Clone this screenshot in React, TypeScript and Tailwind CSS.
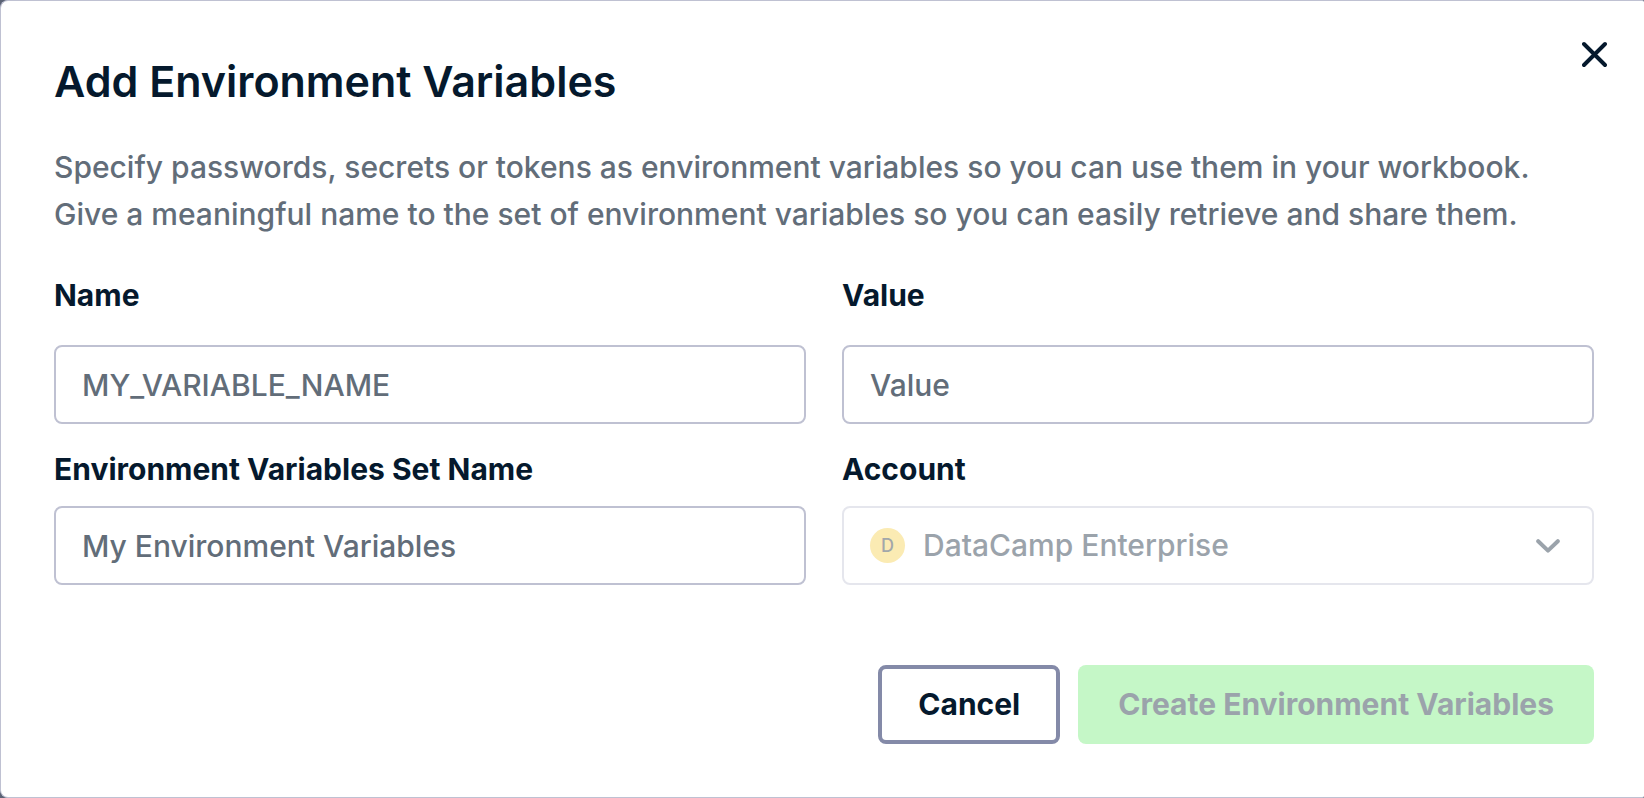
import type { InputHTMLAttributes } from "react";

const labelClass = "text-[30px] leading-10 font-[650]";
const controlClass =
  "h-[79px] w-full rounded-lg border-2 border-[#bfc1d2] bg-white px-[26px] text-[30px] font-[450] outline-none placeholder:text-[#626d79] focus:border-[#848aa8]";

type FieldProps = InputHTMLAttributes<HTMLInputElement> & {
  id: string;
  label: string;
  roomy?: boolean;
};

function TextField({ id, label, roomy, ...rest }: FieldProps) {
  return (
    <div className={roomy ? "flex flex-col gap-[30px]" : "flex flex-col gap-[17px]"}>
      <label htmlFor={id} className={labelClass}>
        {label}
      </label>
      <input id={id} type="text" className={controlClass} {...rest} />
    </div>
  );
}

function AccountField() {
  return (
    <div className="flex flex-col gap-[17px]">
      <label htmlFor="account" className={labelClass}>
        Account
      </label>
      <div className="relative">
        <select
          id="account"
          disabled
          className="h-[79px] w-full appearance-none rounded-lg border-2 border-[#e5e6ed] bg-white pr-20 pl-[79px] text-[30px] font-[450] text-[#9ba3ab] opacity-100"
        >
          <option>DataCamp Enterprise</option>
        </select>
        <div className="pointer-events-none absolute inset-0 flex items-center justify-between pr-[34px] pl-7">
          <span
            aria-hidden="true"
            className="flex size-[35px] items-center justify-center rounded-full bg-[#fbebb3] text-lg font-medium text-[#a2a7aa]"
          >
            D
          </span>
          <svg width="24" height="14" viewBox="0 0 24 14" fill="none" aria-hidden="true">
            <path
              d="M2.2 2.2 12 11.6 21.8 2.2"
              stroke="#9ba3ab"
              strokeWidth="4"
              strokeLinecap="round"
              strokeLinejoin="round"
            />
          </svg>
        </div>
      </div>
    </div>
  );
}

export default function App() {
  return (
    <div className="bg-[#5b6375]">
      <form
        role="dialog"
        aria-labelledby="dialog-title"
        onSubmit={(e) => e.preventDefault()}
        className="relative rounded-l-lg rounded-r-xs border border-r-0 border-[#bfc1d2] bg-white pt-[52px] pr-[50px] pb-[53px] pl-[53px] font-['Inter',sans-serif] text-[#05192d]"
      >
        <button type="button" aria-label="Close" className="absolute top-7 right-6 p-3">
          <svg width="26" height="26" viewBox="0 0 26 26" fill="none" aria-hidden="true">
            <path
              d="M2 3 23 24M23 3 2 24"
              stroke="#05192d"
              strokeWidth="3.9"
              strokeLinecap="round"
            />
          </svg>
        </button>

        <h1 id="dialog-title" className="text-[43px] leading-14 font-semibold">
          Add Environment Variables
        </h1>
        <p className="mt-[35px] text-[30px] leading-[47px] font-[450] text-[#626d79]">
          Specify passwords, secrets or tokens as environment variables so you can use them in your workbook.
          <br />
          Give a meaningful name to the set of environment variables so you can easily retrieve and share them.
        </p>

        <div className="mt-[37px] grid grid-cols-2 gap-x-9 gap-y-[25px]">
          <TextField id="variable-name" label="Name" placeholder="MY_VARIABLE_NAME" roomy />
          <TextField id="variable-value" label="Value" placeholder="Value" roomy />
          <TextField id="set-name" label="Environment Variables Set Name" placeholder="My Environment Variables" />
          <AccountField />
        </div>

        <div className="mt-20 flex justify-end gap-[18px] text-[30px] font-[650]">
          <button type="button" className="h-[79px] rounded-lg border-4 border-[#848aa8] px-9">
            Cancel
          </button>
          <button type="submit" disabled className="h-[79px] rounded-lg bg-[#c5f7c7] px-10 text-[#9ba3ab]">
            Create Environment Variables
          </button>
        </div>
      </form>
    </div>
  );
}
